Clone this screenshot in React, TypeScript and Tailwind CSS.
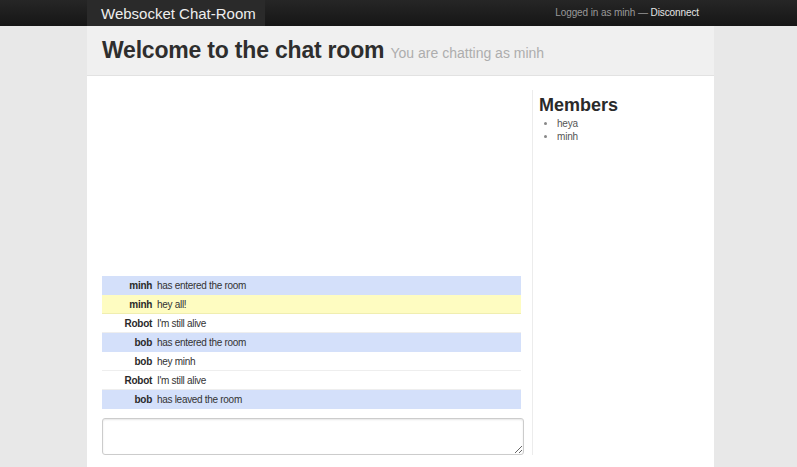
const messages = [
  { id: 1, user: "minh", text: "has entered the room", kind: "event" },
  { id: 2, user: "minh", text: "hey all!", kind: "mine" },
  { id: 3, user: "Robot", text: "I'm still alive", kind: "other" },
  { id: 4, user: "bob", text: "has entered the room", kind: "event" },
  { id: 5, user: "bob", text: "hey minh", kind: "other" },
  { id: 6, user: "Robot", text: "I'm still alive", kind: "other" },
  { id: 7, user: "bob", text: "has leaved the room", kind: "event" },
];

const members = ["heya", "minh"];

const rowColor: Record<string, string> = {
  event: "bg-[#d4e0fa]",
  mine: "bg-[#fefcc1] border-b border-[#f0eeb0]",
  other: "bg-white border-b border-[#eeeeee]",
};

const App = () => {
  return (
    <div className="min-h-[467px] bg-[#e8e8e8] font-['Liberation_Sans',Arial,sans-serif] text-[#333]">
      <div className="h-[26px] bg-gradient-to-b from-[#262626] to-[#161616]">
        <div className="ml-[87px] w-[627px] h-full flex items-center justify-between">
          <div className="h-full w-[178px] bg-[#2a2a2a] pl-[14px] flex items-center whitespace-nowrap text-[15px] text-[#eeeeee] leading-none">
            Websocket Chat-Room
          </div>
          <div className="pr-[15px] whitespace-nowrap text-[10px] tracking-[-0.1px] text-[#999] leading-none">
            Logged in as minh — <span className="text-[#e5e5e5]">Disconnect</span>
          </div>
        </div>
      </div>

      <div className="ml-[87px] w-[627px] bg-white min-h-[441px]">
        <div className="h-[50px] bg-[#f0f0f0] border-b border-[#e2e2e2] pl-[15px] flex items-center">
          <h1 className="text-[23px] font-bold text-[#2e2e2e] leading-none tracking-[-0.2px]">
            Welcome to the chat room{" "}
            <span className="text-[14px] font-normal text-[#adadad] tracking-normal">You are chatting as minh</span>
          </h1>
        </div>

        <div className="flex pl-[15px] pt-[14px]">
          <div className="w-[422px]">
            <div className="h-[319px] flex flex-col justify-end">
              {messages.map((m) => (
                <div key={m.id} className={`w-[419px] h-[19px] flex items-center text-[10px] tracking-[-0.3px] ${rowColor[m.kind]}`}>
                  <span className="w-[50px] text-right font-bold text-[#2a2a2a]">{m.user}</span>
                  <span className="ml-[5px] text-[#333]">{m.text}</span>
                </div>
              ))}
            </div>
            <textarea className="mt-[9px] block w-[422px] h-[37px] border border-[#cccccc] rounded-[3px] shadow-[inset_0_1px_2px_rgba(0,0,0,0.1)] outline-none" />
          </div>

          <div className="ml-[8px] h-[365px] border-l border-[#ececec] pl-[6px] pt-[4px]">
            <h2 className="text-[18px] font-bold text-[#2a2a2a] leading-[22px]">Members</h2>
            <ul className="mt-[1px] pl-[18px] list-disc text-[10px] tracking-[-0.2px] text-[#555] leading-[13px] marker:text-[#888]">
              {members.map((name) => (
                <li key={name}>{name}</li>
              ))}
            </ul>
          </div>
        </div>
      </div>
    </div>
  );
};

export default App;
